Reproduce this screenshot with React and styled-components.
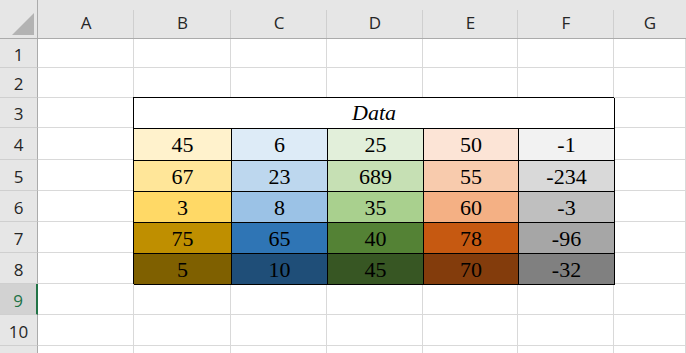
import React from "react";
import styled, { createGlobalStyle } from "styled-components";

const GlobalStyle = createGlobalStyle`
  html, body { margin: 0; padding: 0; background: #fff; overflow: hidden; }
`;

const columns = ["A", "B", "C", "D", "E", "F", "G"];
const rowHeights = [29, 30, 30, 32, 31, 31, 31, 31, 31, 31, 40];

const data = [
  [45, 6, 25, 50, -1],
  [67, 23, 689, 55, -234],
  [3, 8, 35, 60, -3],
  [75, 65, 40, 78, -96],
  [5, 10, 45, 70, -32],
];

const palette = [
  ["#FFF2CC", "#DDEBF7", "#E2EFDA", "#FCE4D6", "#F2F2F2"],
  ["#FFE699", "#BDD7EE", "#C6E0B4", "#F8CBAD", "#D9D9D9"],
  ["#FFD966", "#9BC2E6", "#A9D08E", "#F4B084", "#BFBFBF"],
  ["#BF8F00", "#2F75B5", "#548235", "#C65911", "#A6A6A6"],
  ["#7F6000", "#1F4E78", "#375623", "#833C0C", "#808080"],
];

// the data block covers rows 3..8 (index 2..7), columns B..F (index 1..5)
const inBlock = (r, c) => r >= 2 && r <= 7 && c >= 1 && c <= 5;

const Sheet = styled.div`
  display: grid;
  grid-template-columns: 38px 96px 97px 96px 96px 95px 96px 1fr;
  grid-template-rows: 39px ${rowHeights.map((h) => h + "px").join(" ")};
  width: 686px;
  height: 353px;
  overflow: hidden;
  background: #fff;
`;

const Corner = styled.div`
  background: #e6e6e6;
  border-right: 1px solid #ababab;
  border-bottom: 1px solid #ababab;
  box-sizing: border-box;
  display: flex;
  align-items: flex-end;
  justify-content: flex-end;
  padding: 0 3px 3px 0;
`;

const ColHeader = styled.div`
  background: #e6e6e6;
  box-sizing: border-box;
  border-bottom: 1px solid #ababab;
  position: relative;
  display: flex;
  align-items: center;
  justify-content: center;
  padding-top: 6px;
  font-family: "Open Sans", "Noto Sans", sans-serif;
  font-size: 17px;
  color: #262626;
  &::after {
    content: "";
    position: absolute;
    right: 0;
    top: 10px;
    bottom: 0;
    width: 1px;
    background: ${(p) => (p.$last ? "transparent" : "#cfcfcf")};
  }
`;

const RowHeader = styled.div`
  background: ${(p) => (p.$active ? "#d2d2d2" : "#e6e6e6")};
  color: ${(p) => (p.$active ? "#217346" : "#262626")};
  box-sizing: border-box;
  border-right: ${(p) => (p.$active ? "2px solid #217346" : "1px solid #ababab")};
  border-bottom: 1px solid #cfcfcf;
  display: flex;
  align-items: center;
  justify-content: center;
  font-family: "Open Sans", "Noto Sans", sans-serif;
  font-size: 17px;
  padding-top: 2px;
`;

const Cell = styled.div`
  box-sizing: border-box;
  border-right: 1px solid #d9d9d9;
  border-bottom: 1px solid #d9d9d9;
`;

const Block = styled.div`
  grid-column: 3 / 8;
  grid-row: 4 / 10;
  margin: -1px 0 0 -1px;
  display: grid;
  grid-template-columns: 98px 96px 96px 95px 96px;
  grid-template-rows: 31px 32px 31px 31px 31px 31px;
  border-left: 1px solid #000;
  border-top: 1px solid #000;
  background: #fff;
  z-index: 1;
`;

const Title = styled.div`
  grid-column: 1 / 6;
  box-sizing: border-box;
  border-right: 1px solid #000;
  border-bottom: 1px solid #000;
  display: flex;
  align-items: center;
  justify-content: center;
  font-family: "Liberation Serif", "Times New Roman", serif;
  font-style: italic;
  font-size: 22px;
  color: #000;
`;

const Value = styled.div`
  box-sizing: border-box;
  border-right: 1px solid #000;
  border-bottom: 1px solid #000;
  background: ${(p) => p.$bg};
  display: flex;
  align-items: center;
  justify-content: center;
  padding-top: 1px;
  font-family: "Liberation Serif", "Times New Roman", serif;
  font-size: 22px;
  color: #000;
`;

function CornerTriangle() {
  return (
    <svg width="22" height="22" viewBox="0 0 22 22">
      <polygon points="22,0 22,22 0,22" fill="#b3b3b3" />
    </svg>
  );
}

export default function App() {
  return (
    <>
      <GlobalStyle />
      <Sheet>
        <Corner>
          <CornerTriangle />
        </Corner>
        {columns.map((c, i) => (
          <ColHeader key={c} $last={i === columns.length - 1}>
            {c}
          </ColHeader>
        ))}
        {rowHeights.map((_, r) => (
          <React.Fragment key={r}>
            <RowHeader $active={r === 8}>{r < 10 ? r + 1 : ""}</RowHeader>
            {columns.map((c, ci) => (inBlock(r, ci) ? null : <Cell key={c} />))}
          </React.Fragment>
        ))}
        <Block>
          <Title>Data</Title>
          {data.map((row, r) =>
            row.map((v, c) => (
              <Value key={r + "-" + c} $bg={palette[r][c]}>
                {v}
              </Value>
            ))
          )}
        </Block>
      </Sheet>
    </>
  );
}
